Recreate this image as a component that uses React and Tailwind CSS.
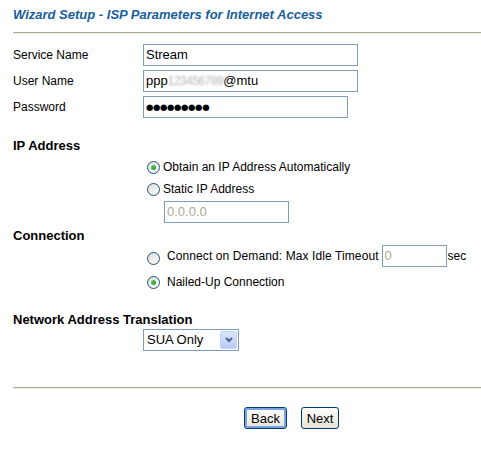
import React from 'react';

const FONT = { fontFamily: '"Liberation Sans", Arial, sans-serif' };

function Radio({ checked }) {
  return (
    <span className="shrink-0 w-[13px] h-[13px] rounded-full border border-[#1c5180] bg-gradient-to-br from-[#dcdcd7] to-white flex items-center justify-center">
      {checked && <span className="w-[5px] h-[5px] rounded-full bg-gradient-to-br from-[#5ed35e] to-[#1b931b]" />}
    </span>
  );
}

function Field({ w, children, dim }) {
  return (
    <div className={`h-[22px] border border-[#7f9db9] bg-white flex items-center px-[2px] text-[13px] ${dim ? 'text-[#aca899]' : 'text-black'}`} style={{ width: w }}>
      {children}
    </div>
  );
}

function Row({ label, children }) {
  return (
    <div className="flex items-center h-[22px]">
      <div className="w-[130px] text-[12px]">{label}</div>
      {children}
    </div>
  );
}

function XpButton({ label, w, focused }) {
  return (
    <button
      className={`h-[22px] rounded-[3px] border border-[#003c74] bg-gradient-to-b from-white to-[#e6e3d6] text-[13px] text-black leading-none ${focused ? 'shadow-[inset_0_0_0_2px_#7ba2e7]' : ''}`}
      style={{ width: w }}
    >
      {label}
    </button>
  );
}

function Rule() {
  return (
    <div className="border-t border-[#aca899] border-b border-b-[#f1efe2] h-[2px]" />
  );
}

export default function App() {
  return (
    <div className="w-[481px] h-[451px] bg-white pl-[13px] text-black overflow-hidden" style={FONT}>
      <div className="pt-[7px] h-[23px] leading-[16px] text-[13px] font-bold italic text-[#17609c]">
        Wizard Setup - ISP Parameters for Internet Access
      </div>
      <div className="mt-[9px]"><Rule /></div>

      <div className="mt-[10px] flex flex-col gap-[4px]">
        <Row label="Service Name"><Field w={215}>Stream</Field></Row>
        <Row label="User Name">
          <Field w={215}>
            ppp<span className="text-[#b4b4b4] blur-[1.2px] text-[12px] tracking-[-0.5px]">123456789</span>@mtu
          </Field>
        </Row>
        <Row label="Password">
          <Field w={205}>
            <span className="text-[8.5px] tracking-[-0.4px] leading-none" style={{ fontFamily: '"DejaVu Sans", sans-serif' }}>●●●●●●●●●</span>
          </Field>
        </Row>
      </div>

      <div className="mt-[21px] h-[14px] leading-[14px] text-[13px] font-bold">IP Address</div>
      <div className="ml-[134px] mt-[5px] h-[18px] flex items-center gap-[3px] text-[12px]">
        <Radio checked /> Obtain an IP Address Automatically
      </div>
      <div className="ml-[134px] mt-[4px] h-[18px] flex items-center gap-[3px] text-[12px]">
        <Radio /> Static IP Address
      </div>
      <div className="ml-[151px] mt-[3px]"><Field w={125} dim>0.0.0.0</Field></div>

      <div className="mt-[6px] h-[14px] leading-[14px] text-[13px] font-bold">Connection</div>
      <div className="ml-[134px] mt-[2px] h-[22px] flex items-center text-[12px]">
        <span className="mt-[5px]"><Radio /></span>
        <span className="ml-[7px] tracking-[0.1px]">Connect on Demand: Max Idle Timeout</span>
        <span className="ml-[3px]"><Field w={65} dim>0</Field></span>
        <span className="ml-[1px]">sec</span>
      </div>
      <div className="ml-[134px] mt-[6px] h-[18px] flex items-center text-[12px]">
        <Radio checked />
        <span className="ml-[7px]">Nailed-Up Connection</span>
      </div>

      <div className="mt-[22px] h-[14px] leading-[14px] text-[13px] font-bold">Network Address Translation</div>
      <div className="ml-[130px] mt-[2px] w-[96px] h-[22px] border border-[#7f9db9] flex items-center justify-between pl-[3px] pr-[1px] text-[13px]">
        SUA Only
        <span className="w-[17px] h-[18px] rounded-[2px] bg-gradient-to-b from-[#dbe6fd] to-[#b7cbf7] border border-[#c3d3fd] flex items-center justify-center">
          <svg width="8" height="6" viewBox="0 0 8 6"><path d="M1 1l3 3 3-3" fill="none" stroke="#4d6185" strokeWidth="2" /></svg>
        </span>
      </div>

      <div className="mt-[36px]"><Rule /></div>
      <div className="mt-[18px] ml-[231px] flex gap-[14px]">
        <XpButton label="Back" w={43} focused />
        <XpButton label="Next" w={38} />
      </div>
    </div>
  );
}
